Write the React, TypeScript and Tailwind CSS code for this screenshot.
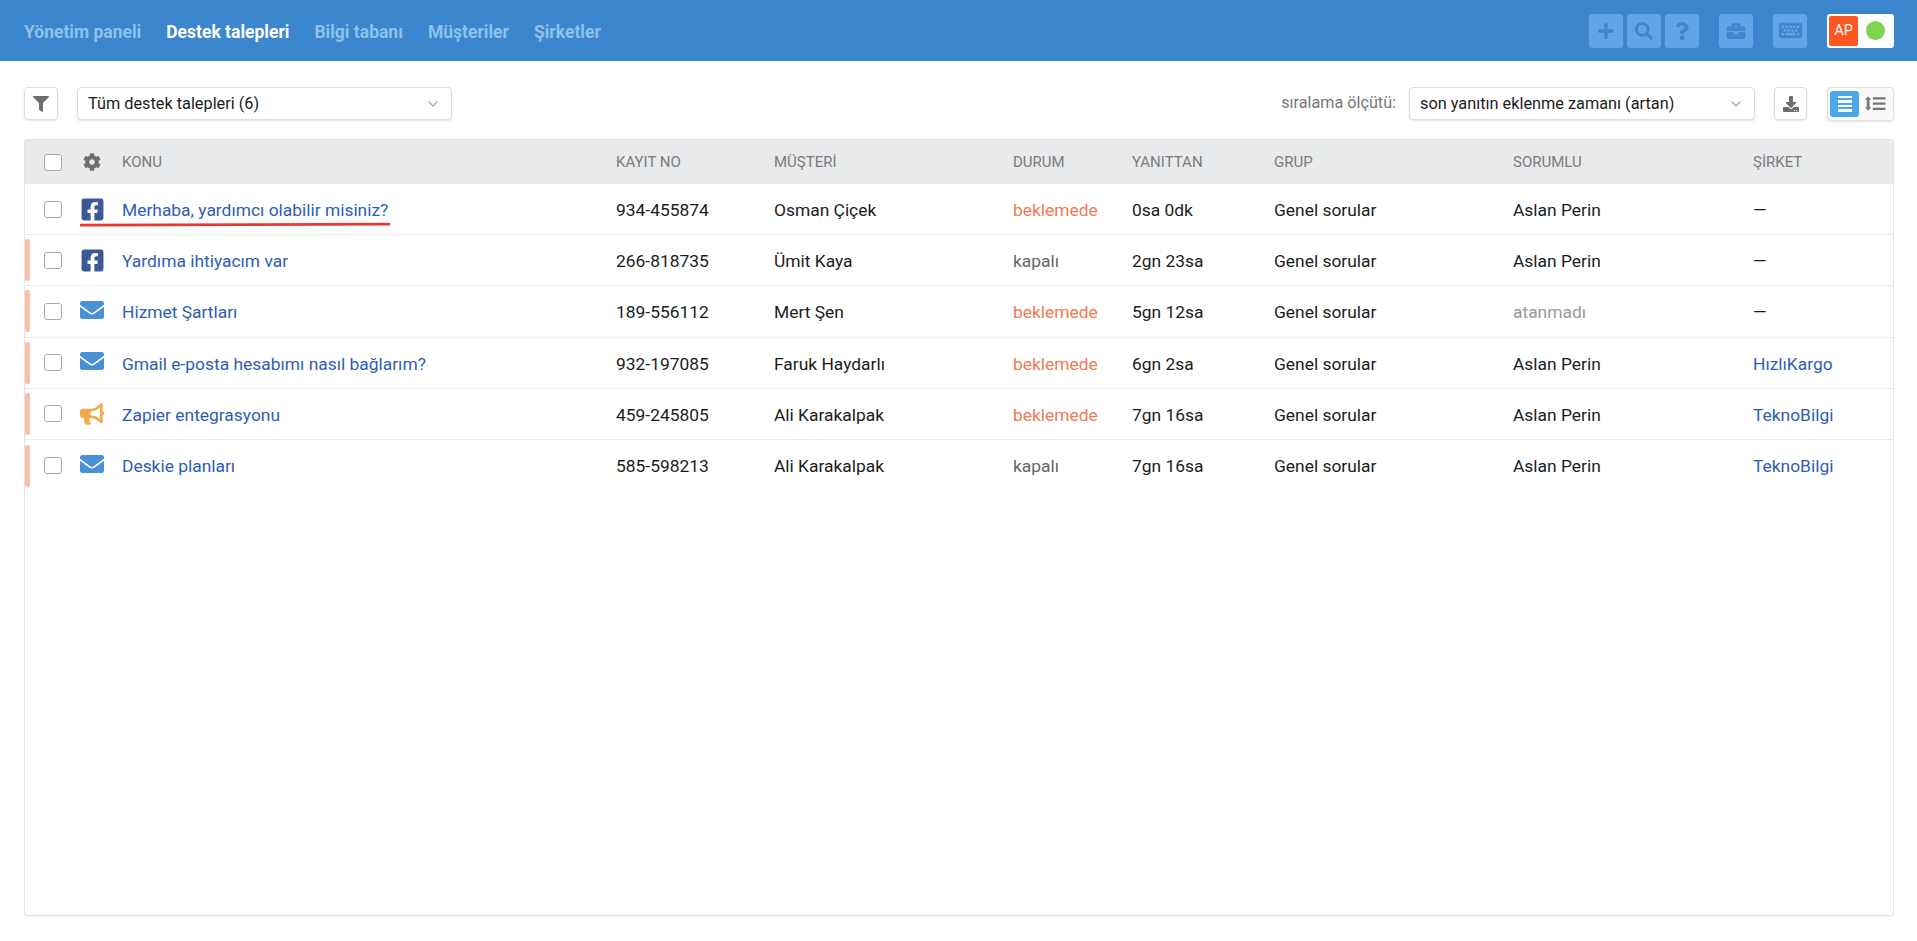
import React from "react";
import { FaPlus, FaSearch, FaQuestion, FaBriefcase, FaKeyboard, FaFilter, FaCog, FaFacebookSquare, FaEnvelope, FaBullhorn, FaDownload } from "react-icons/fa";
import { ChevronDown } from "lucide-react";

const cols = "grid grid-cols-[56px_41px_494px_158px_239px_119px_142px_239px_240px_1fr] items-center";

const nav = ["Yönetim paneli", "Destek talepleri", "Bilgi tabanı", "Müşteriler", "Şirketler"];

type Row = { channel: "fb" | "mail" | "horn"; subject: string; no: string; customer: string; status: string; reply: string; owner: string; company: string };
const rows: Row[] = [
  { channel: "fb", subject: "Merhaba, yardımcı olabilir misiniz?", no: "934-455874", customer: "Osman Çiçek", status: "beklemede", reply: "0sa 0dk", owner: "Aslan Perin", company: "—" },
  { channel: "fb", subject: "Yardıma ihtiyacım var", no: "266-818735", customer: "Ümit Kaya", status: "kapalı", reply: "2gn 23sa", owner: "Aslan Perin", company: "—" },
  { channel: "mail", subject: "Hizmet Şartları", no: "189-556112", customer: "Mert Şen", status: "beklemede", reply: "5gn 12sa", owner: "atanmadı", company: "—" },
  { channel: "mail", subject: "Gmail e-posta hesabımı nasıl bağlarım?", no: "932-197085", customer: "Faruk Haydarlı", status: "beklemede", reply: "6gn 2sa", owner: "Aslan Perin", company: "HızlıKargo" },
  { channel: "horn", subject: "Zapier entegrasyonu", no: "459-245805", customer: "Ali Karakalpak", status: "beklemede", reply: "7gn 16sa", owner: "Aslan Perin", company: "TeknoBilgi" },
  { channel: "mail", subject: "Deskie planları", no: "585-598213", customer: "Ali Karakalpak", status: "kapalı", reply: "7gn 16sa", owner: "Aslan Perin", company: "TeknoBilgi" },
];

function Check() {
  return <span className="block w-[18px] h-[17px] border-[1.5px] border-[#a9a9a9] rounded-[3px] bg-white" />;
}

function TopBtn({ children }: { children: React.ReactNode }) {
  return <div className="w-[34px] h-[34px] bg-[#5fa5e8] rounded-[3px] flex items-center justify-center text-[#3b86cc]">{children}</div>;
}

function Channel({ c }: { c: Row["channel"] }) {
  if (c === "fb") return <FaFacebookSquare className="text-[#3b5998] w-[25px] h-[25px] -ml-[1.5px]" />;
  if (c === "mail") return <FaEnvelope className="text-[#4a90d6] w-[24px] h-[24px] -ml-[1px] -mt-[3px]" />;
  return <FaBullhorn className="text-[#f2aa4c] w-[24px] h-[24px] -ml-[1px]" />;
}

function Select({ label, w }: { label: string; w: string }) {
  return (
    <div className={`${w} h-[33px] border border-[#dcdcdc] rounded-[4px] shadow-[0_1px_2px_rgba(0,0,0,0.1)] bg-white flex items-center justify-between pl-[10px] pr-[10px] text-[16.3px] text-[#1c1c1c]`}>
      <span className="pt-[2px]">{label}</span>
      <ChevronDown size={16} className="text-[#aaa]" />
    </div>
  );
}

export default function App() {
  return (
    <div className="h-[941px] bg-white flex flex-col overflow-hidden font-['Roboto',sans-serif]">
      <header className="h-[61px] bg-[#3b86cc] flex items-center justify-between pl-[24px] pr-[23px] shrink-0">
        <nav className="flex gap-[25px] text-[17.5px] font-bold text-[#8fc0ee] pt-[4px]">
          {nav.map((n, i) => (
            <span key={n} className={i === 1 ? "text-white" : ""}>{n}</span>
          ))}
        </nav>
        <div className="flex items-center">
          <div className="flex gap-[4px]">
            <TopBtn><FaPlus size={18} /></TopBtn>
            <TopBtn><FaSearch size={18} /></TopBtn>
            <TopBtn><FaQuestion size={18} /></TopBtn>
          </div>
          <div className="ml-[20px]"><TopBtn><FaBriefcase size={18} /></TopBtn></div>
          <div className="ml-[20px]"><TopBtn><FaKeyboard size={23} /></TopBtn></div>
          <div className="ml-[20px] w-[67px] h-[34px] bg-white rounded-[3px] flex items-center pl-[2px]">
            <span className="w-[29px] h-[30px] bg-[#ff5722] rounded-[2px] text-white text-[14.5px] flex items-center justify-center">AP</span>
            <span className="ml-[8px] w-[19px] h-[19px] rounded-full bg-[#7ed550]" />
          </div>
        </div>
      </header>

      <div className="h-[78px] shrink-0 flex items-center justify-between pl-[24px] pr-[23px] pt-[7px]">
        <div className="flex items-center">
          <div className="w-[34px] h-[33px] border border-[#dcdcdc] rounded-[4px] shadow-[0_1px_2px_rgba(0,0,0,0.1)] flex items-center justify-center text-[#6e6e6e]">
            <FaFilter size={16} />
          </div>
          <div className="ml-[19px]"><Select label="Tüm destek talepleri (6)" w="w-[375px]" /></div>
        </div>
        <div className="flex items-center">
          <span className="text-[#777] text-[16.2px] mr-[13px]">sıralama ölçütü:</span>
          <Select label="son yanıtın eklenme zamanı (artan)" w="w-[346px]" />
          <div className="ml-[19px] w-[33px] h-[33px] border border-[#dcdcdc] rounded-[4px] shadow-[0_1px_2px_rgba(0,0,0,0.1)] flex items-center justify-center text-[#6e6e6e]">
            <FaDownload size={16} />
          </div>
          <div className="ml-[20px] w-[67px] h-[34px] border border-[#e0e0e0] rounded-[4px] bg-[#fafafa] shadow-[0_1px_2px_rgba(0,0,0,0.1)] flex items-center pl-[2px]">
            <span className="w-[29px] h-[26px] bg-[#4aa8e8] rounded-[3px] flex flex-col items-center justify-center gap-[2px]">
              <i className="block w-[14px] h-[2.5px] bg-white" />
              <i className="block w-[14px] h-[2.5px] bg-white" />
              <i className="block w-[14px] h-[2.5px] bg-white" />
              <i className="block w-[14px] h-[2.5px] bg-white" />
            </span>
            <svg viewBox="0 0 20 14" className="ml-[6px] w-[21px] h-[15px]" fill="#777">
              <path d="M3 0l3 3.4H4.3v7.2H6L3 14 0 10.6h1.7V3.4H0z" />
              <rect x="7.5" y="1" width="12" height="2.2" />
              <rect x="7.5" y="6" width="12" height="2.2" />
              <rect x="7.5" y="11" width="12" height="2.2" />
            </svg>
          </div>
        </div>
      </div>

      <main className="mx-[24px] w-[1870px] h-[777px] border border-[#e3e3e3] rounded-[3px] shadow-[0_1px_2px_rgba(0,0,0,0.06)]">
        <div className={`${cols} h-[44px] bg-[#e9eaec] text-[15px] text-[#7b7b7b]`}>
          <div className="pl-[19px]"><Check /></div>
          <div className="pl-[2px] text-[#6f6f6f]"><FaCog size={18} /></div>
          <div>KONU</div>
          <div>KAYIT NO</div>
          <div>MÜŞTERİ</div>
          <div>DURUM</div>
          <div>YANITTAN</div>
          <div>GRUP</div>
          <div>SORUMLU</div>
          <div>ŞİRKET</div>
        </div>
        {rows.map((r, i) => (
          <div key={r.no} className={`${cols} relative h-[51.2px] text-[17.4px] text-[#1c1c1c] ${i < rows.length - 1 ? "border-b border-[#ebebeb]" : ""}`}>
            <div className="flex items-center">
              <span className={`w-[5px] h-[42px] rounded-[2px] ${i === 0 ? "" : "bg-[#f9c0a9]"}`} />
              <span className="ml-[14px]"><Check /></span>
            </div>
            <div><Channel c={r.channel} /></div>
            <div className="pt-[2px] text-[#2f5db5]">{r.subject}</div>
            <div className="pt-[2px]">{r.no}</div>
            <div className="pt-[2px]">{r.customer}</div>
            <div className={`pt-[2px] ${r.status === "beklemede" ? "text-[#ef7b55]" : "text-[#666]"}`}>{r.status}</div>
            <div className="pt-[2px]">{r.reply}</div>
            <div className="pt-[2px]">Genel sorular</div>
            <div className={`pt-[2px] ${r.owner === "atanmadı" ? "text-[#999]" : ""}`}>{r.owner}</div>
            <div className={`pt-[2px] ${r.company === "—" ? "" : "text-[#2f5db5]"}`}>{r.company}</div>
            {i === 0 && (
              <svg viewBox="0 0 310 5" className="absolute left-[55px] top-[38px] w-[310px] h-[5px]" fill="none">
                <path d="M1 3.2 C70 2.6 150 1.8 309 2.2" stroke="#e53935" strokeWidth="2.8" strokeLinecap="round" />
              </svg>
            )}
          </div>
        ))}
      </main>
    </div>
  );
}
